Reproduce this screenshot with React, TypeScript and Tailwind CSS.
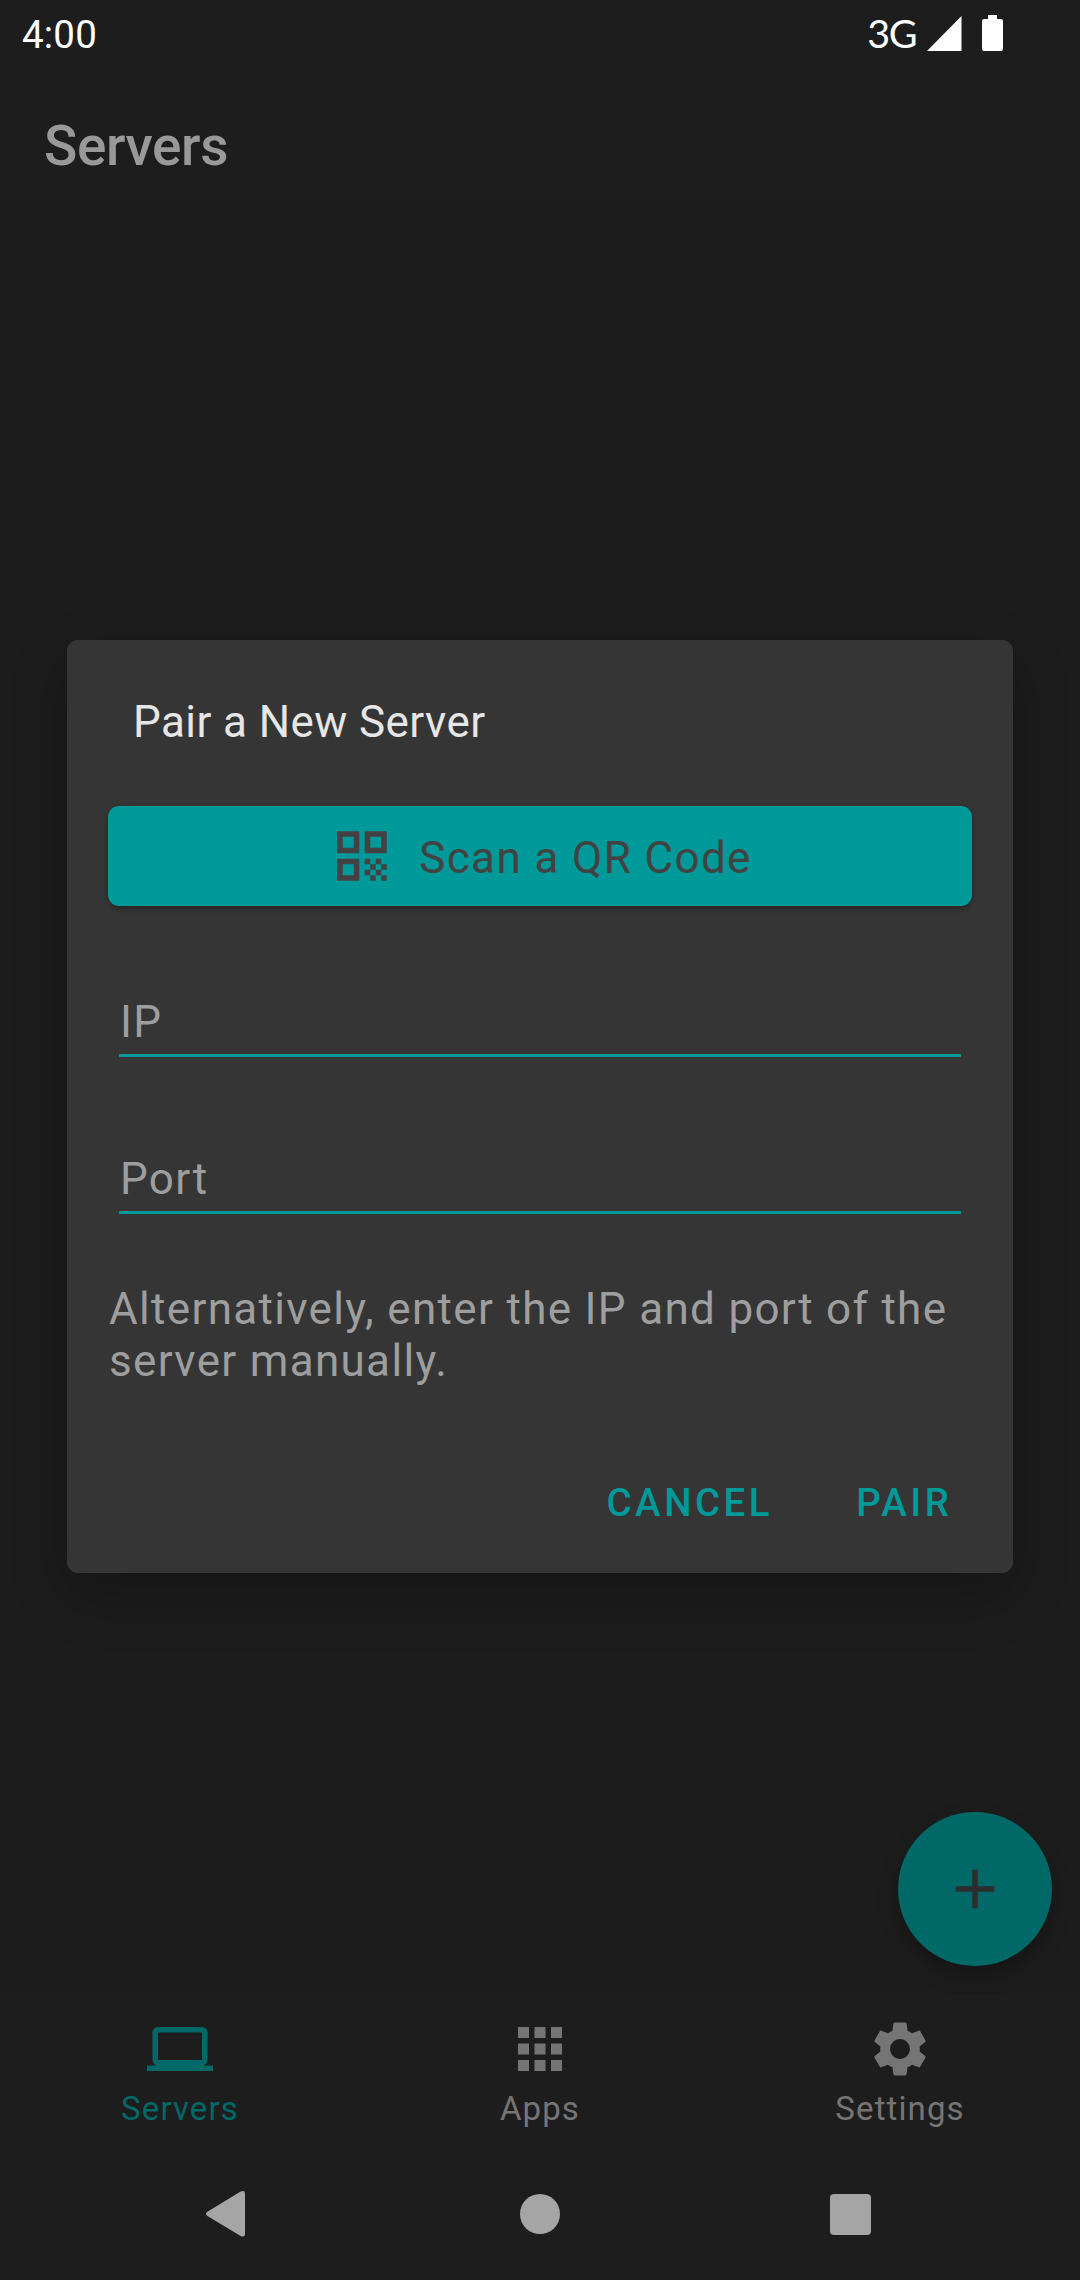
import React from "react";

function StatusBar() {
  return (
    <header className="flex h-[66px] items-center justify-between pl-[22px] pr-[77px] text-white">
      <span className="pt-[3px] text-[38.5px] leading-[44px] tracking-[0.2px]">4:00</span>
      <div className="flex items-center">
        <span className="mr-[11px] font-['Lato'] text-[39.5px] font-normal leading-[44px] tracking-[-1.5px]">3G</span>
        <svg className="mr-5 h-[35px] w-[35px]" viewBox="0 0 35 35" fill="currentColor">
          <path d="M34.500 0V35H0z" />
        </svg>
        <svg className="h-9 w-[21px]" viewBox="0 0 21 36" fill="currentColor">
          <path d="M6 0h9v4h4a2 2 0 0 1 2 2v28a2 2 0 0 1-2 2H2a2 2 0 0 1-2-2V6a2 2 0 0 1 2-2h4z" />
        </svg>
      </div>
    </header>
  );
}

const tabs = [
  {
    label: "Servers",
    color: "text-[#006866]",
    path: "M20 18c1.100 0 1.990-.9 1.990-2L22 6c0-1.100-.9-2-2-2H4c-1.100 0-2 .9-2 2v10c0 1.100.9 2 2 2H0v2h24v-2h-4zM4 6h16v10H4V6z",
  },
  {
    label: "Apps",
    color: "text-[#757575]",
    path: "M4 8h4V4H4v4zm6 12h4v-4h-4v4zm-6 0h4v-4H4v4zm0-6h4v-4H4v4zm6 0h4v-4h-4v4zm6-10v4h4V4h-4zm-6 4h4V4h-4v4zm6 6h4v-4h-4v4zm0 6h4v-4h-4v4z",
  },
  {
    label: "Settings",
    color: "text-[#757575]",
    path: "M19.140 12.940c.04-.3.060-.61.060-.94 0-.32-.02-.64-.07-.94l2.030-1.580c.18-.14.230-.41.120-.61l-1.920-3.320c-.12-.22-.37-.29-.59-.22l-2.390.96c-.5-.38-1.030-.7-1.620-.94l-.36-2.540c-.04-.24-.24-.41-.48-.41h-3.840c-.24 0-.43.170-.47.410l-.36 2.540c-.59.240-1.130.570-1.620.940l-2.390-.96c-.22-.08-.47 0-.59.220L2.740 8.870c-.12.210-.08.470.120.610l2.030 1.580c-.05.300-.09.630-.09.940s.02.640.070.940l-2.030 1.580c-.18.140-.23.410-.12.610l1.920 3.320c.12.220.370.290.590.220l2.390-.96c.5.380 1.030.700 1.620.940l.36 2.540c.05.240.240.410.480.410h3.840c.24 0 .44-.17.470-.41l.36-2.540c.59-.24 1.130-.56 1.620-.94l2.390.960c.22.080.470 0 .59-.22l1.920-3.320c.12-.22.070-.47-.12-.61l-2.010-1.580zM12 15.600c-1.980 0-3.600-1.620-3.600-3.600s1.620-3.600 3.600-3.600 3.600 1.620 3.600 3.600-1.620 3.600-3.600 3.600z",
  },
];

function BottomNav() {
  return (
    <nav className="grid h-[154px] grid-cols-3 bg-[#1d1d1d]">
      {tabs.map((tab) => (
        <div key={tab.label} className={`flex flex-col items-center pt-[22px] ${tab.color}`}>
          <svg className="h-[66px] w-[66px]" viewBox="0 0 24 24" fill="currentColor">
            <path d={tab.path} />
          </svg>
          <span className="mt-[7px] text-[33px] leading-[39px] tracking-[1.1px]">{tab.label}</span>
        </div>
      ))}
    </nav>
  );
}

function SystemNav() {
  return (
    <div className="flex h-[132px] items-center pl-[206px] text-[#a5a5a5]">
      <svg className="h-[46px] w-10" viewBox="0 0 40 46" fill="currentColor">
        <path d="M1.400 20.700 34.200.8Q39 -1.500 39 3V43Q39 47 34.200 44.700L1.400 24.900Q-1.500 22.800 1.400 20.700z" />
      </svg>
      <div className="ml-[274px] h-10 w-10 rounded-full bg-current" />
      <div className="ml-[270px] mt-[1px] h-[41px] w-[41px] rounded-[4px] bg-current" />
    </div>
  );
}

function PairDialog() {
  return (
    <section className="flex h-[933px] w-[946px] flex-col rounded-[11px] bg-[#353535] px-[41px] shadow-[0_22px_56px_rgba(0,0,0,0.24)]">
      <h2 className="mt-[56px] pl-[25px] text-[44px] leading-[52px] tracking-[0.41px] text-[#e6e6e6]">
        Pair a New Server
      </h2>
      <button className="mt-[58px] flex h-[100px] items-center justify-center rounded-[11px] bg-[#009999] pl-px text-[#424242] shadow-[0_3px_5px_rgba(0,0,0,0.3)]">
        <svg className="h-[66px] w-[66px]" viewBox="0 0 24 24" fill="currentColor">
          <path d="M3 11h8V3H3v8zm2-6h4v4H5V5zM3 21h8v-8H3v8zm2-6h4v4H5v-4zM13 3v8h8V3h-8zm6 6h-4V5h4v4zM19 19h2v2h-2zM13 13h2v2h-2zM15 15h2v2h-2zM13 17h2v2h-2zM15 19h2v2h-2zM17 17h2v2h-2zM17 13h2v2h-2zM19 15h2v2h-2z" />
        </svg>
        <span className="ml-[24px] mt-[4px] text-[44px] leading-[52px] tracking-[1.375px]">Scan a QR Code</span>
      </button>
      <div className="mx-[11px] mt-[90px] h-[61px] border-b-[3px] border-[#009999] pl-px text-[44px] leading-[52px] tracking-[1.375px] text-[#9e9e9e]">
        IP
      </div>
      <div className="mx-[11px] mt-[96px] h-[61px] border-b-[3px] border-[#009999] pl-px text-[44px] leading-[52px] tracking-[1.375px] text-[#9e9e9e]">
        Port
      </div>
      <p className="mt-[69px] whitespace-nowrap pl-px text-[44px] leading-[52px] tracking-[1.32px] text-[#9e9e9e]">
        Alternatively, enter the IP and port of the
        <br />
        server manually.
      </p>
      <div className="mt-[94px] flex justify-end gap-[83px] pr-[19.5px] text-[38.5px] font-medium leading-[44px] tracking-[3.5px] text-[#009999]">
        <button>CANCEL</button>
        <button>PAIR</button>
      </div>
    </section>
  );
}

export default function App() {
  return (
    <div className="relative flex h-[2280px] w-[1080px] flex-col overflow-hidden bg-[#1d1d1d] font-['Roboto',sans-serif]">
      <StatusBar />
      <h1 className="h-[132px] pl-[44px] pt-[48px] text-[55px] font-medium leading-[64px] tracking-[-0.4px] text-[#999999]">Servers</h1>
      <main className="flex flex-1 items-end justify-end bg-[#1c1c1c] pb-7 pr-7">
        <button className="flex h-[154px] w-[154px] items-center justify-center rounded-full bg-[#006866] text-[#2d2d2d] shadow-[0_10px_20px_rgba(0,0,0,0.26)]">
          <svg className="h-[66px] w-[66px]" viewBox="0 0 24 24" fill="currentColor">
            <path d="M19 13h-6v6h-2v-6H5v-2h6V5h2v6h6v2z" />
          </svg>
        </button>
      </main>
      <BottomNav />
      <SystemNav />
      <div className="absolute inset-0 flex items-start justify-center pt-[640px]">
        <PairDialog />
      </div>
    </div>
  );
}
